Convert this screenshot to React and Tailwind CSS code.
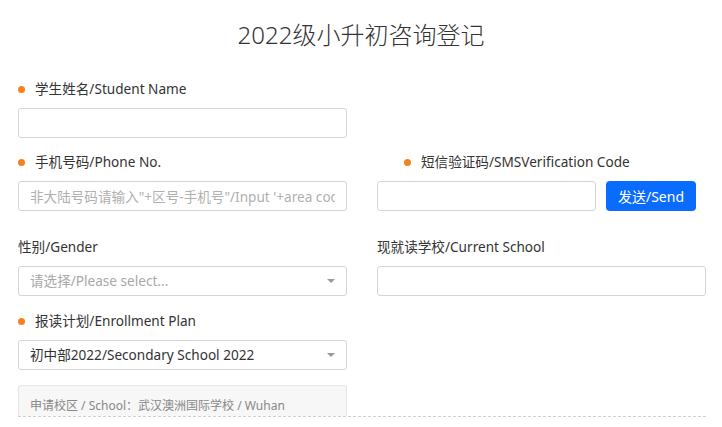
import React from 'react';

const font = { fontFamily: '"Noto Sans", "Noto Sans CJK SC", sans-serif' };

const Dot = () => <span className="inline-block w-[7px] h-[7px] rounded-full bg-[#f5821f] mr-[10px]" />;

const Label = ({ children, required, className = '' }) => (
  <div className={`flex items-center h-[20px] text-[13.6px] text-[#333] ${className}`}>
    {required && <Dot />}
    <span>{children}</span>
  </div>
);

const Input = ({ placeholder, className = '' }) => (
  <input
    placeholder={placeholder}
    className={`block h-[30px] px-[11px] border border-[#d4d4d4] rounded-[3px] text-[13.6px] text-[#333] placeholder:text-[#b0b0b0] outline-none ${className}`}
    style={font}
  />
);

const Select = ({ value, muted }) => (
  <div className="flex items-center justify-between h-[30px] pl-[11px] pr-[11px] border border-[#d4d4d4] rounded-[3px] text-[13.6px]">
    <span className={muted ? 'text-[#a8a8a8]' : 'text-[#333]'}>{value}</span>
    <span className="w-0 h-0 border-l-[4px] border-r-[4px] border-t-[4px] border-l-transparent border-r-transparent border-t-[#9a9a9a]" />
  </div>
);

export default function App() {
  return (
    <div className="w-[722px] h-[427px] bg-white overflow-hidden" style={font}>
      <div className="h-[70px] flex items-center justify-center text-[24px] font-light text-[#333]">
        2022级小升初咨询登记
      </div>

      <div className="ml-[18px] w-[688px]">
        <div className="mt-[9px] grid grid-cols-2 gap-x-[30px]">
          <div>
            <Label required>学生姓名/Student Name</Label>
            <Input className="mt-[9px] w-full" />
          </div>
        </div>

        <div className="mt-[14px] grid grid-cols-2 gap-x-[30px]">
          <div>
            <Label required>手机号码/Phone No.</Label>
            <Input className="mt-[9px] w-full" placeholder={'非大陆号码请输入"+区号-手机号"/Input \'+area code-phone number\''} />
          </div>
          <div>
            <Label required className="pl-[27px]">短信验证码/SMSVerification Code</Label>
            <div className="mt-[9px] flex items-center">
              <Input className="w-[219px]" />
              <button className="ml-[10px] w-[90px] h-[30px] rounded-[4px] bg-[#0a6cff] text-white text-[14px]">
                发送/Send
              </button>
            </div>
          </div>
        </div>

        <div className="mt-[26px] grid grid-cols-2 gap-x-[30px]">
          <div>
            <Label>性别/Gender</Label>
            <div className="mt-[9px]">
              <Select value="请选择/Please select..." muted />
            </div>
          </div>
          <div>
            <Label>现就读学校/Current School</Label>
            <Input className="mt-[9px] w-full" />
          </div>
        </div>

        <div className="mt-[15px] grid grid-cols-2 gap-x-[30px]">
          <div>
            <Label required>报读计划/Enrollment Plan</Label>
            <div className="mt-[9px]">
              <Select value="初中部2022/Secondary School 2022" />
            </div>
          </div>
        </div>

        <div className="mt-[15px] border-b border-dashed border-[#cfcfcf]">
          <div className="w-[329px] h-[31px] bg-[#f7f7f7] border border-b-0 border-[#e6e6e6] rounded-t-[3px] flex items-end pb-[1px] px-[11px] text-[12px] text-[#888]">
            申请校区 / School：武汉澳洲国际学校 / Wuhan
          </div>
        </div>
      </div>
    </div>
  );
}
